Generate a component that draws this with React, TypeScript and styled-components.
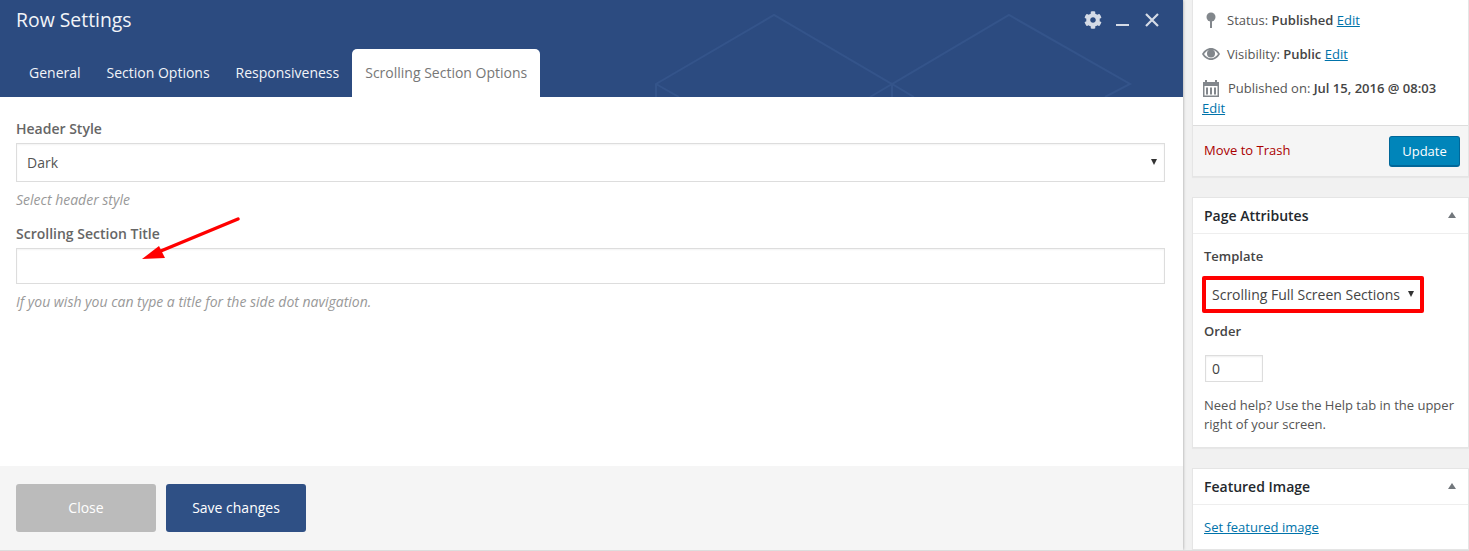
import React from 'react';
import styled, { createGlobalStyle } from 'styled-components';
import { FaCog } from 'react-icons/fa';

const GlobalStyle = createGlobalStyle`
  html, body {
    margin: 0;
    padding: 0;
    background: #f1f1f1;
  }

  * {
    box-sizing: border-box;
  }
`;

const Page = styled.div`
  width: 1469px;
  height: 551px;
  display: flex;
  overflow: hidden;
  background: #f1f1f1;
  border-bottom: 1px solid #ddd;
  font-family: 'Open Sans', sans-serif;
`;

const Modal = styled.section`
  position: relative;
  width: 1183px;
  flex-shrink: 0;
  display: flex;
  flex-direction: column;
  background: #fff;
  box-shadow: 0 0 3px rgba(0, 0, 0, 0.35);
`;

const ModalHeader = styled.header`
  position: relative;
  height: 97px;
  flex-shrink: 0;
  display: flex;
  flex-direction: column;
  justify-content: space-between;
  background: #2c4b80;
  overflow: hidden;
`;

const HeaderPattern = styled.svg`
  position: absolute;
  top: 0;
  left: 0;
`;

const TitleBar = styled.div`
  position: relative;
  display: flex;
  align-items: center;
  justify-content: space-between;
  height: 40px;
  padding: 0 24px 0 16px;
`;

const Title = styled.h2`
  margin: -2px 0 0;
  font-size: 19.4px;
  font-weight: 400;
  color: #f2f4f8;
`;

const WindowControls = styled.div`
  display: flex;
  align-items: center;
  gap: 14px;
  color: #d5dbe6;
`;

const TabBar = styled.nav`
  position: relative;
  display: flex;
  padding-left: 16px;
`;

const Tab = styled.div<{ $active?: boolean }>`
  height: 48px;
  padding: 0 13px 2px;
  display: flex;
  align-items: center;
  font-size: 14px;
  border-radius: 5px 5px 0 0;
  color: ${(p) => (p.$active ? '#777' : '#f2f4f8')};
  background: ${(p) => (p.$active ? '#fff' : 'transparent')};
`;

const ModalBody = styled.div`
  flex: 1;
  padding: 22px 18px 0 16px;
`;

const FieldLabel = styled.label`
  display: block;
  font-size: 14px;
  font-weight: 600;
  line-height: 20px;
  color: #666;
  margin-bottom: 4px;
`;

const SelectBox = styled.div`
  position: relative;
  height: 39px;
  padding-left: 10px;
  display: flex;
  align-items: center;
  font-size: 14px;
  color: #555;
  border: 1px solid #ddd;
  box-shadow: inset 0 1px 2px rgba(0, 0, 0, 0.05);

  &::after {
    content: '';
    position: absolute;
    right: 7px;
    top: 15px;
    border-left: 3px solid transparent;
    border-right: 3px solid transparent;
    border-top: 6px solid #333;
  }
`;

const TextBox = styled.div`
  height: 36px;
  border: 1px solid #ddd;
  box-shadow: inset 0 1px 2px rgba(0, 0, 0, 0.05);
`;

const Hint = styled.p<{ $gap: number }>`
  margin: 8px 0 ${(p) => p.$gap}px;
  font-size: 14px;
  font-style: italic;
  line-height: 20px;
  color: #999;
`;

const ArrowMark = styled.svg`
  position: absolute;
  top: 210px;
  left: 135px;
`;

const ModalFooter = styled.footer`
  height: 84px;
  flex-shrink: 0;
  display: flex;
  align-items: flex-start;
  gap: 10px;
  padding: 18px 16px 0;
  background: #f5f5f5;
`;

const FooterButton = styled.button<{ $primary?: boolean }>`
  width: 140px;
  height: 48px;
  padding: 0 0 2px;
  border: 0;
  border-radius: 3px;
  font-family: inherit;
  font-size: 14px;
  color: #fff;
  background: ${(p) => (p.$primary ? '#2f5085' : '#bbb')};
`;

const Sidebar = styled.aside`
  width: 277px;
  flex-shrink: 0;
  margin-left: 9px;
  display: flex;
  flex-direction: column;
  gap: 20px;
  font-size: 13px;
  color: #555;
`;

const Card = styled.div`
  flex-shrink: 0;
  background: #fff;
  border: 1px solid #e5e5e5;
  box-shadow: 0 1px 1px rgba(0, 0, 0, 0.04);
`;

const PublishCard = styled(Card)`
  border-top: 0;
`;

const PublishBody = styled.div`
  padding: 3px 9px 0;
`;

const MiscRow = styled.div`
  line-height: 20px;
  padding: 7px 0;

  svg {
    vertical-align: -4px;
  }

  b {
    font-weight: 600;
    color: #444;
  }
`;

const TextLink = styled.a`
  color: #0073aa;
  text-decoration: underline;
`;

const PublishActions = styled.div`
  height: 51px;
  padding: 0 8px 0 11px;
  display: flex;
  align-items: center;
  justify-content: space-between;
  background: #f5f5f5;
  border-top: 1px solid #ddd;
`;

const TrashLink = styled.a`
  color: #a00;
  margin-top: -2px;
`;

const UpdateButton = styled.button`
  width: 71px;
  height: 31px;
  border: 1px solid #006799;
  border-bottom-width: 2px;
  border-radius: 3px;
  font-family: inherit;
  font-size: 13px;
  color: #fff;
  background: #0085ba;
`;

const CardHeader = styled.div`
  position: relative;
  height: 36px;
  padding-left: 11px;
  display: flex;
  align-items: center;
  font-size: 14px;
  font-weight: 600;
  color: #23282d;
  border-bottom: 1px solid #eee;

  &::after {
    content: '';
    position: absolute;
    right: 12px;
    top: 14px;
    border-left: 4px solid transparent;
    border-right: 4px solid transparent;
    border-bottom: 6px solid #72777c;
  }
`;

const AttributesBody = styled.div`
  padding: 12px 11px 13px;
`;

const AttributeLabel = styled.div`
  line-height: 20px;
  font-weight: 600;
  color: #444;
`;

const TemplateSelect = styled.div`
  position: relative;
  width: 222px;
  height: 37px;
  margin: 10px 0 8px -2px;
  padding-left: 6px;
  display: flex;
  align-items: center;
  font-size: 14px;
  color: #444;
  background: #fff;
  border: 4px solid #f00;
  border-radius: 2px;

  &::after {
    content: '';
    position: absolute;
    right: 6px;
    top: 11px;
    border-left: 3px solid transparent;
    border-right: 3px solid transparent;
    border-top: 6px solid #333;
  }
`;

const OrderInput = styled.div`
  width: 58px;
  height: 27px;
  margin: 14px 0 14px 1px;
  padding-left: 6px;
  display: flex;
  align-items: center;
  font-size: 14px;
  color: #444;
  border: 1px solid #ddd;
  box-shadow: inset 0 1px 2px rgba(0, 0, 0, 0.07);
`;

const HelpText = styled.p`
  margin: 0;
  line-height: 19px;
`;

const FeaturedBody = styled.div`
  padding: 12px 11px;
  line-height: 20px;
`;

const PinIcon = () => (
  <svg width="18" height="18" viewBox="0 0 18 18" style={{ marginRight: 7 }}>
    <circle cx="9" cy="6" r="4.5" fill="#82878c" />
    <rect x="8" y="9" width="2" height="8" fill="#82878c" />
  </svg>
);

const EyeIcon = () => (
  <svg width="18" height="18" viewBox="0 0 18 18" style={{ marginRight: 7 }}>
    <path d="M0 9c2-3.600 5.200-6 9-6s7 2.400 9 6c-2 3.600-5.200 6-9 6s-7-2.400-9-6z" fill="#82878c" />
    <path d="M2 9c1.500-2 3-3.300 4.500-4a5 5 0 0 0 5 0c1.800.8 3.300 2 4.500 4-1.800 2.500-4 4.200-7 4.200S3.800 11.500 2 9z" fill="#fff" />
    <circle cx="9" cy="8.500" r="4" fill="#82878c" />
  </svg>
);

const CalendarIcon = () => (
  <svg width="18" height="18" viewBox="0 0 18 18" style={{ marginRight: 8 }}>
    <path
      fillRule="evenodd"
      d="M1 3h2V1h2v2h8V1h2v2h2v15H1V3zm1.500 4v9.500h13V7h-13z"
      fill="#82878c"
    />
    <path d="M4 8.500h2v7H4zM8 8.500h2v7H8zM12 8.500h2v7h-2z" fill="#82878c" />
  </svg>
);

const tabs = ['General', 'Section Options', 'Responsiveness', 'Scrolling Section Options'];

const App: React.FC = () => {
  return (
    <Page>
      <GlobalStyle />
      <Modal>
        <ModalHeader>
          <HeaderPattern width="1183" height="97" fill="none" stroke="#34548a" strokeWidth="2">
            <path d="M656 97V84L774 15 892 84 1009 15 1130 84 1105 97M656 84l23 13M892 97V84l22 13M892 84l-22 13" />
          </HeaderPattern>
          <TitleBar>
            <Title>Row Settings</Title>
            <WindowControls>
              <FaCog size={18} />
              <svg width="15" height="14" viewBox="0 0 15 14">
                <rect x="0" y="11" width="13" height="2" fill="currentColor" />
              </svg>
              <svg width="14" height="14" viewBox="0 0 14 14">
                <path d="M1 1l12 12M13 1L1 13" stroke="currentColor" strokeWidth="2.200" />
              </svg>
            </WindowControls>
          </TitleBar>
          <TabBar>
            {tabs.map((tab, index) => (
              <Tab key={tab} $active={index === tabs.length - 1}>
                {tab}
              </Tab>
            ))}
          </TabBar>
        </ModalHeader>
        <ModalBody>
          <FieldLabel>Header Style</FieldLabel>
          <SelectBox>Dark</SelectBox>
          <Hint $gap={14}>Select header style</Hint>
          <FieldLabel>Scrolling Section Title</FieldLabel>
          <TextBox />
          <Hint $gap={0}>If you wish you can type a title for the side dot navigation.</Hint>
        </ModalBody>
        <ArrowMark width="110" height="55" viewBox="135 210 110 55">
          <path d="M238 219L156 253" stroke="#f00" strokeWidth="3.500" strokeLinecap="round" />
          <path d="M142 259l17-13 6 12z" fill="#f00" />
        </ArrowMark>
        <ModalFooter>
          <FooterButton>Close</FooterButton>
          <FooterButton $primary>Save changes</FooterButton>
        </ModalFooter>
      </Modal>
      <Sidebar>
        <PublishCard>
          <PublishBody>
            <MiscRow>
              <PinIcon />
              Status: <b>Published</b> <TextLink>Edit</TextLink>
            </MiscRow>
            <MiscRow>
              <EyeIcon />
              Visibility: <b>Public</b> <TextLink>Edit</TextLink>
            </MiscRow>
            <MiscRow>
              <CalendarIcon />
              Published on: <b>Jul 15, 2016 @ 08:03</b> <TextLink>Edit</TextLink>
            </MiscRow>
          </PublishBody>
          <PublishActions>
            <TrashLink>Move to Trash</TrashLink>
            <UpdateButton>Update</UpdateButton>
          </PublishActions>
        </PublishCard>
        <Card>
          <CardHeader>Page Attributes</CardHeader>
          <AttributesBody>
            <AttributeLabel>Template</AttributeLabel>
            <TemplateSelect>Scrolling Full Screen Sections</TemplateSelect>
            <AttributeLabel>Order</AttributeLabel>
            <OrderInput>0</OrderInput>
            <HelpText>Need help? Use the Help tab in the upper right of your screen.</HelpText>
          </AttributesBody>
        </Card>
        <Card>
          <CardHeader>Featured Image</CardHeader>
          <FeaturedBody>
            <TextLink>Set featured image</TextLink>
          </FeaturedBody>
        </Card>
      </Sidebar>
    </Page>
  );
};

export default App;
